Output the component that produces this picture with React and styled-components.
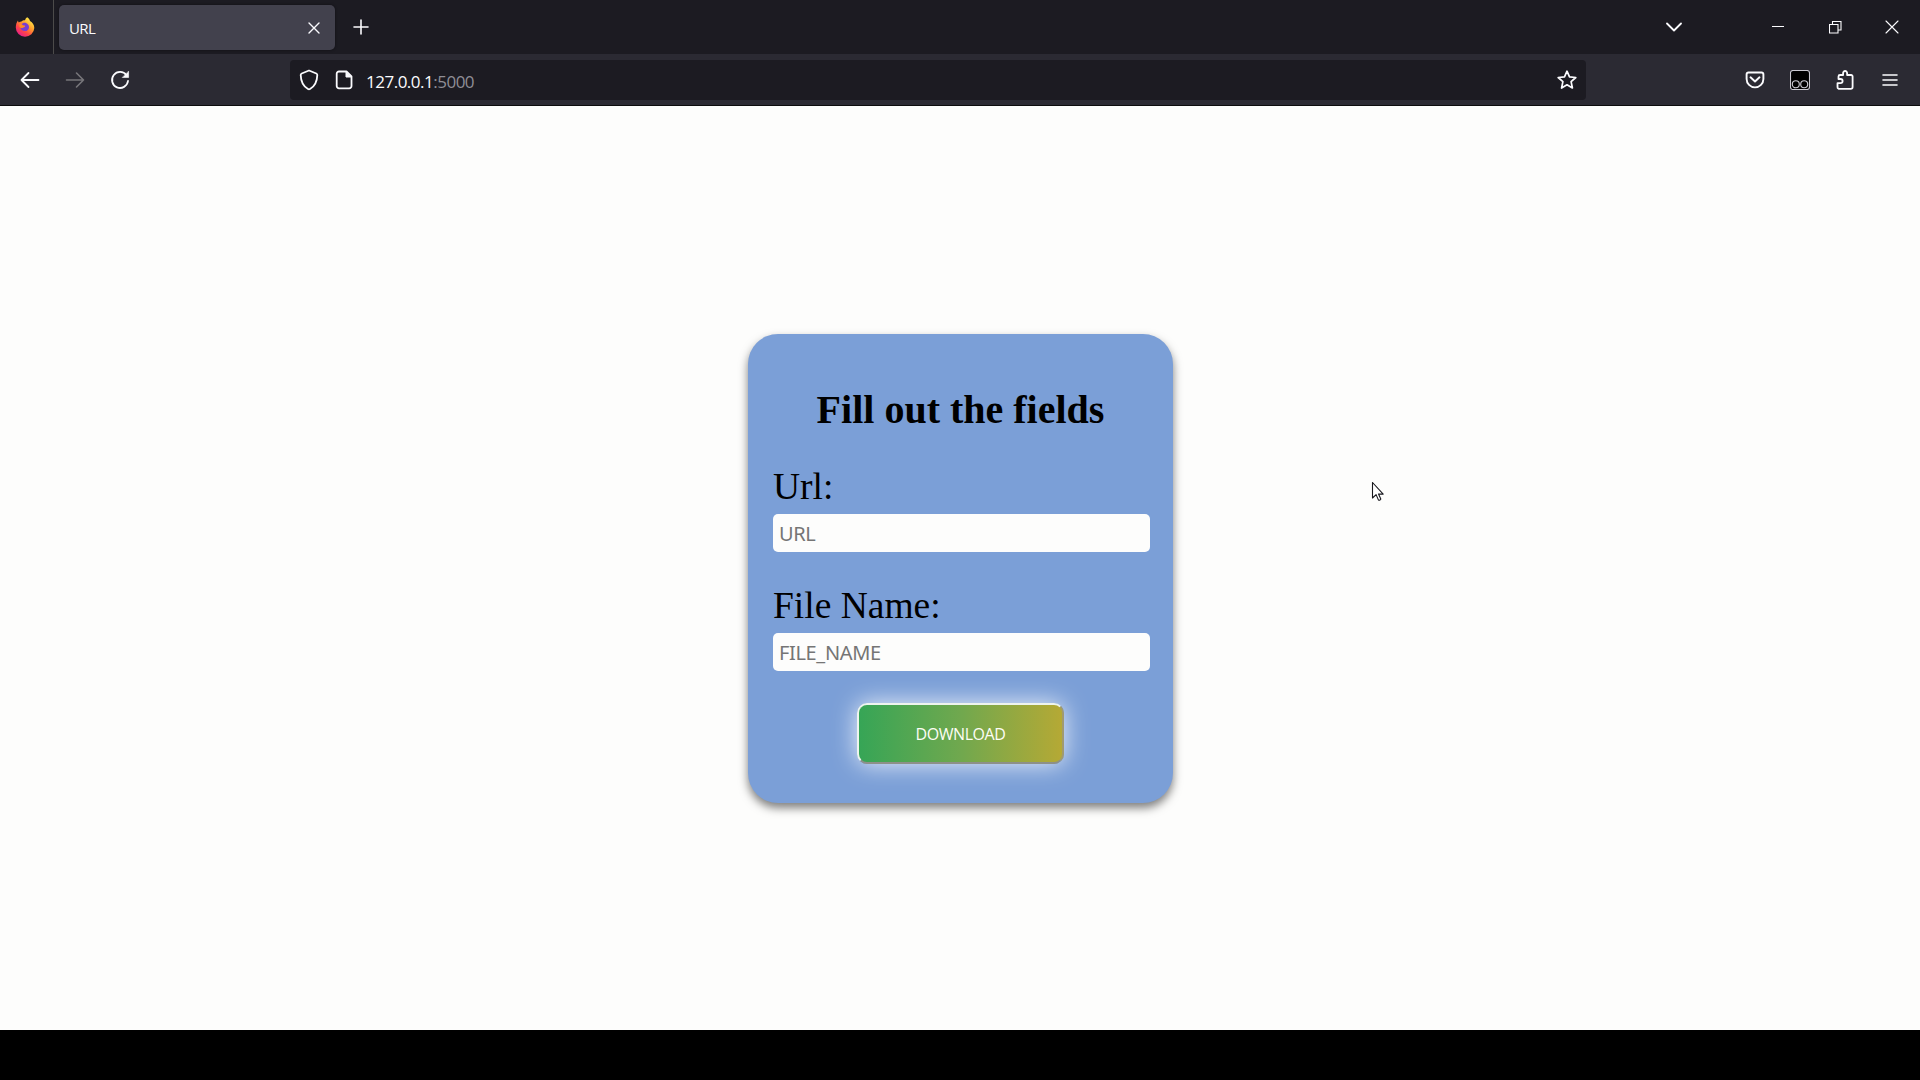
import React from "react";
import styled, { createGlobalStyle } from "styled-components";

const Global = createGlobalStyle`
  *, *::before, *::after { box-sizing: border-box; }
  html, body { margin: 0; padding: 0; background: #000; }
  body { width: 1920px; height: 1080px; overflow: hidden; }
`;

const chromeFont = `"Open Sans", "Noto Sans", sans-serif`;

const Screen = styled.div`
  position: relative;
  display: flex;
  flex-direction: column;
  width: 1920px;
  height: 1080px;
  background: #000;
`;

const TabBar = styled.header`
  display: flex;
  align-items: stretch;
  height: 54px;
  background: #1c1b22;
  font-family: ${chromeFont};
`;

const AppBadge = styled.div`
  display: flex;
  align-items: center;
  justify-content: center;
  width: 54px;
  padding: 0 3px 0 0;
  border-right: 1px solid #4c4b4a;
`;

const Tab = styled.div`
  display: flex;
  align-items: center;
  justify-content: space-between;
  width: 276px;
  height: 45px;
  margin: 5px 0 0 5px;
  padding: 0 14px 0 10px;
  border-radius: 5px;
  background: #42414d;
  box-shadow: 0 0 3px rgba(0, 0, 0, 0.45);
`;

const TabTitle = styled.span`
  font-size: 15px;
  line-height: 20px;
  letter-spacing: -0.6px;
  color: #fbfbfe;
`;

const IconSlot = styled.span`
  display: flex;
  align-items: center;
  justify-content: center;
  flex: none;
  width: ${(p) => p.$w}px;
  margin-left: ${(p) => (p.$end ? "auto" : "0")};
  color: ${(p) => p.$color || "#fbfbfe"};
  svg { display: block; flex: none; }
`;

const WindowControls = styled.div`
  display: flex;
  align-items: stretch;
  margin-left: auto;
`;

const Toolbar = styled.nav`
  display: flex;
  align-items: center;
  height: 52px;
  background: #2b2a33;
  border-bottom: 1px solid #0c0c0d;
  font-family: ${chromeFont};
`;

const NavButtons = styled.div`
  display: flex;
  width: 290px;
  padding-left: 7px;
`;

const AddressBar = styled.div`
  display: flex;
  align-items: center;
  width: 1296px;
  height: 40px;
  padding-left: 2px;
  border-radius: 4px;
  background: #1c1b22;
`;

const Address = styled.span`
  margin-left: 4px;
  padding-top: 5px;
  font-size: 17px;
  line-height: 24px;
  letter-spacing: -0.5px;
  color: #fbfbfe;
`;

const Port = styled.span`
  color: #8f8e96;
`;

const ToolbarActions = styled.div`
  display: flex;
  margin-left: auto;
  padding-right: 8px;
`;

const Page = styled.main`
  display: flex;
  align-items: center;
  justify-content: center;
  height: 924px;
  padding-left: 1px;
  background: #fdfdfc;
`;

const Card = styled.form`
  display: flex;
  flex-direction: column;
  width: 425px;
  height: 469px;
  padding: 53px 25px 0;
  border-radius: 30px;
  background: #7b9fd7;
  box-shadow: 0 5px 10px rgba(0, 0, 0, 0.5);
  font-family: "Liberation Serif", serif;
`;

const Title = styled.h1`
  margin: 0;
  font-size: 40px;
  line-height: 46px;
  font-weight: 700;
  text-align: center;
  color: #000;
`;

const Fields = styled.div`
  display: flex;
  flex-direction: column;
  margin-top: 28px;
`;

const Field = styled.label`
  display: flex;
  flex-direction: column;
  height: 119.5px;
  font-size: 37.5px;
  line-height: 51px;
  color: #000;
`;

const TextInput = styled.input`
  width: 377px;
  height: 38px;
  margin: 2px 0 0;
  padding: 1px 6px 0;
  border: 0;
  border-radius: 5px;
  background: #fdfdfc;
  font-family: "Noto Sans", sans-serif;
  font-size: 20px;
  letter-spacing: -0.35px;
  outline: none;
  &::placeholder { color: #757575; opacity: 1; }
`;

const DownloadButton = styled.button`
  align-self: center;
  width: 207px;
  height: 61px;
  margin: 3px 0 0;
  padding: 2px 0 0;
  border: 2px solid;
  border-color: #eef4ee #a09a70 #8d9088 #eef4ee;
  border-radius: 10px;
  background: linear-gradient(90deg, #36a556 0%, #70a84e 50%, #b5a935 100%);
  box-shadow: 0 0 25px rgba(255, 255, 255, 0.85);
  font-family: "Open Sans", "Noto Sans", sans-serif;
  font-size: 16px;
  letter-spacing: -0.45px;
  color: #fdfdf5;
`;

const Pointer = styled.svg`
  position: absolute;
  left: 1371px;
  top: 481px;
`;

const Stroke = ({ w, h, sw = 1.6, children, ...rest }) => (
  <svg
    width={w}
    height={h}
    viewBox={`0 0 ${w} ${h}`}
    fill="none"
    stroke="currentColor"
    strokeWidth={sw}
    strokeLinecap="round"
    strokeLinejoin="round"
    {...rest}
  >
    {children}
  </svg>
);

const Firefox = () => (
  <svg width="20" height="20" viewBox="0 0 20 20">
    <defs>
      <linearGradient id="flame" x1="0.85" y1="0.1" x2="0.25" y2="0.95">
        <stop offset="0" stopColor="#fff04a" />
        <stop offset="0.4" stopColor="#ff9a2c" />
        <stop offset="0.7" stopColor="#ff4646" />
        <stop offset="1" stopColor="#e81f88" />
      </linearGradient>
    </defs>
    <path
      d="M12.2 0.300c2 1.400 2.600 2.800 2.800 3.800 2.600 1.500 4.300 4 4.300 7A9.200 9.200 0 0 1 10 19.800 9.200 9.200 0 0 1 .8 10.600c0-3 .8-5.200 2.200-7 .1 1 .4 1.500.8 2C4.600 4.900 5.400 4.600 6.400 4.600 7.500 3.300 9 3 10 3.200c.5-1.500 1.300-2.400 2.200-2.900z"
      fill="url(#flame)"
    />
    <path
      d="M6.300 7.500c1.200-1.600 3-2 4.700-1.600 1.900.6 3.100 2.300 3 4.300-.1 2.500-2 4-4.300 3.900-2.300 0-4.200-1.700-4.200-3.800 1 .8 2.200.8 3 .2.7-.5 1.500-.6 1.600-1.100.1-.4-.6-.7-1.400-.8C7.800 8.500 7.300 7.500 6.300 7.500z"
      fill="#7a3fd0"
    />
    <path d="M4.500 7.200c1.300-.5 2.500 0 3 .7.400.7 1.400.8 2.500 1-.3 1-1.600 1-2.200 1.700-.9.900-2.400.5-3.300-.6z" fill="#ff8a28" />
  </svg>
);

export default function App() {
  return (
    <>
      <Global />
      <Screen>
        <TabBar>
          <AppBadge>
            <Firefox />
          </AppBadge>
          <Tab>
            <TabTitle>URL</TabTitle>
            <IconSlot $w={14}>
              <Stroke w={12} h={12} sw={1.4}><path d="M1 1l10 10M11 1L1 11" /></Stroke>
            </IconSlot>
          </Tab>
          <IconSlot $w={52}>
            <Stroke w={16} h={16} sw={1.6}><path d="M8 1v14M1 8h14" /></Stroke>
          </IconSlot>
          <WindowControls>
            <IconSlot $w={150}>
              <Stroke w={16} h={10} sw={1.8}><path d="M1 1.500l7 7 7-7" /></Stroke>
            </IconSlot>
            <IconSlot $w={58}>
              <Stroke w={12} h={2} sw={1} strokeLinecap="butt"><path d="M0 .5h12" /></Stroke>
            </IconSlot>
            <IconSlot $w={56}>
              <Stroke w={13} h={13} sw={1.1} strokeLinejoin="miter">
                <path d="M.5 3.500h8.500v8.500H.5zM3.500 3.500V.5h8.500V9H9" />
              </Stroke>
            </IconSlot>
            <IconSlot $w={57}>
              <Stroke w={14} h={14} sw={1.1}><path d="M1 1l12 12M13 1L1 13" /></Stroke>
            </IconSlot>
          </WindowControls>
        </TabBar>

        <Toolbar>
          <NavButtons>
            <IconSlot $w={46}>
              <Stroke w={20} h={18} sw={1.8}><path d="M18.500 9H1.500M8.500 2L1.500 9l7 7" /></Stroke>
            </IconSlot>
            <IconSlot $w={44} $color="#77767a">
              <Stroke w={20} h={18} sw={1.6}><path d="M1.500 9h17M11.500 2l7 7-7 7" /></Stroke>
            </IconSlot>
            <IconSlot $w={46}>
              <Stroke w={20} h={20} sw={1.8}>
                <path d="M16.500 5.200A8 8 0 1 0 18 11" />
                <path d="M18.600 1.500v6h-6z" fill="currentColor" strokeWidth="0.6" />
              </Stroke>
            </IconSlot>
          </NavButtons>
          <AddressBar>
            <IconSlot $w={34}>
              <Stroke w={20} h={22} sw={1.8}>
                <path d="M10 1.500l7.300 3c.7.300 1 .8 1 1.500-.2 6.500-2.800 11.500-7.300 14-.7.400-1.300.4-2 0C4.500 17.500 1.900 12.500 1.700 6c0-.7.3-1.200 1-1.500z" />
              </Stroke>
            </IconSlot>
            <IconSlot $w={36}>
              <Stroke w={18} h={20} sw={1.8}>
                <path d="M4 1.500h7.500l5 5V16a2.300 2.300 0 0 1-2.300 2.300H4A2.300 2.300 0 0 1 1.700 16V3.800A2.300 2.300 0 0 1 4 1.500z" />
                <path d="M11 2v5h5z" fill="currentColor" strokeWidth="1" />
              </Stroke>
            </IconSlot>
            <Address>127.0.0.1<Port>:5000</Port></Address>
            <IconSlot $w={38} $end>
              <Stroke w={20} h={20} sw={1.7}>
                <path d="M10 1.200l2.500 5.700 6.300.6-4.700 4.200 1.300 6.300-5.400-3.200L4.600 18l1.300-6.300L1.200 7.500l6.300-.6z" />
              </Stroke>
            </IconSlot>
          </AddressBar>
          <ToolbarActions>
            <IconSlot $w={45}>
              <Stroke w={20} h={18} sw={1.9}>
                <path d="M3.500 1.500h13A2 2 0 0 1 18.400 3.400V8a8.400 8.400 0 0 1-16.800 0V3.400A2 2 0 0 1 3.500 1.500zM5.500 6.300L10 10.500l4.500-4.200" />
              </Stroke>
            </IconSlot>
            <IconSlot $w={45}>
              <Stroke w={20} h={20} sw={1.1} color="#c9c8d0">
                <rect x=".5" y=".5" width="19" height="19" rx="2.500" fill="#000" />
                <circle cx="5.800" cy="14.300" r="3.500" />
                <circle cx="14.200" cy="14.300" r="3.500" />
              </Stroke>
            </IconSlot>
            <IconSlot $w={45}>
              <Stroke w={20} h={20} sw={1.8}>
                <path d="M3.500 18.800h12.300a1.800 1.800 0 0 0 1.800-1.800V6.500a1.500 1.500 0 0 0-1.500-1.500h-4V3a2 2 0 0 0-4 0v2H5a1.500 1.500 0 0 0-1.500 1.500V9h2a2 2 0 0 1 0 4.200h-3V17a1.800 1.800 0 0 0 1 1.800z" />
              </Stroke>
            </IconSlot>
            <IconSlot $w={45}>
              <Stroke w={16} h={14} sw={1.6}><path d="M1 2h14M1 7h14M1 12h14" /></Stroke>
            </IconSlot>
          </ToolbarActions>
        </Toolbar>

        <Page>
          <Card>
            <Title>Fill out the fields</Title>
            <Fields>
              <Field>
                Url:
                <TextInput placeholder="URL" />
              </Field>
              <Field>
                File Name:
                <TextInput placeholder="FILE_NAME" />
              </Field>
            </Fields>
            <DownloadButton type="button">DOWNLOAD</DownloadButton>
          </Card>
        </Page>

        <Pointer width="14" height="22" viewBox="0 0 14 22">
          <path
            d="M1.500 1.500v15.500l3.600-3.400 2.400 5.500c1 .4 2-.1 2.300-1l-2.300-5h4.700z"
            fill="#fff"
            stroke="#16161c"
            strokeWidth="1.1"
            strokeLinejoin="round"
          />
        </Pointer>
      </Screen>
    </>
  );
}
